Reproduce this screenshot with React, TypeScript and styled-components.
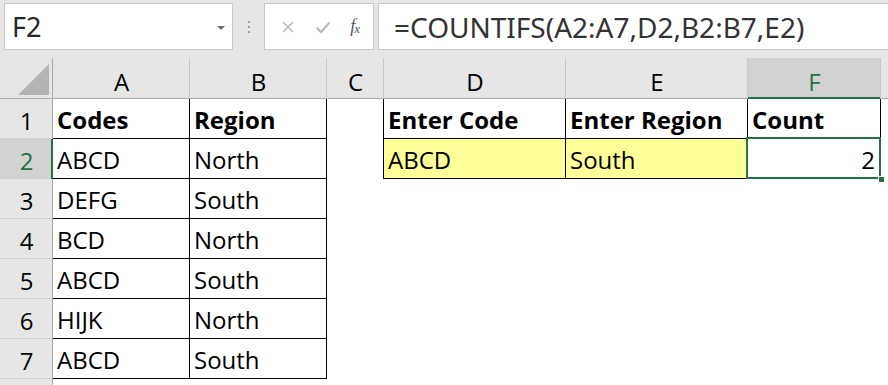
import React from 'react';
import styled, { createGlobalStyle, css } from 'styled-components';

const GlobalStyle = createGlobalStyle`
  html, body {
    margin: 0;
    padding: 0;
    background: #ffffff;
  }
`;

const GREEN = '#217346';
const CELL_FONT = `'Open Sans', 'Noto Sans', sans-serif`;
const UI_FONT = `'Noto Sans', 'Open Sans', sans-serif`;

const Sheet = styled.div`
  width: 888px;
  height: 385px;
  overflow: hidden;
  background: #ffffff;
`;

const Toolbar = styled.div`
  display: flex;
  align-items: flex-start;
  height: 58px;
  box-sizing: border-box;
  padding: 3px 0 0 4px;
  background: #e6e6e6;
`;

const Box = styled.div`
  height: 47px;
  box-sizing: border-box;
  background: #ffffff;
  border: 1px solid #c8c8c8;
  display: flex;
  align-items: center;
`;

const NameBox = styled(Box)`
  width: 229px;
  justify-content: space-between;
  padding: 0 7px 0 7px;
  font-family: ${UI_FONT};
  font-size: 27px;
  color: #262626;
`;

const DropArrow = styled.span`
  width: 0;
  height: 0;
  border-left: 4px solid transparent;
  border-right: 4px solid transparent;
  border-top: 4px solid #6f6f6f;
  margin-top: 2px;
`;

const Grip = styled.div`
  width: 31px;
  height: 47px;
  display: flex;
  flex-direction: column;
  align-items: center;
  justify-content: center;
  gap: 3px;

  span {
    width: 2px;
    height: 2px;
    background: #9e9e9e;
  }
`;

const ButtonBox = styled(Box)`
  width: 110px;
  justify-content: space-around;
  padding: 0 4px 0 6px;
`;

const FxLabel = styled.span`
  font-family: 'Liberation Serif', serif;
  font-style: italic;
  font-size: 18px;
  color: #555555;
  letter-spacing: -1px;

  sub {
    font-size: 13px;
    vertical-align: -1px;
  }
`;

const FormulaBox = styled(Box)`
  flex: 1;
  margin-left: 4px;
  margin-right: -2px;
  padding-left: 15px;
  font-family: ${UI_FONT};
  font-size: 28px;
  color: #333333;
  white-space: nowrap;
`;

const Grid = styled.div`
  display: grid;
  grid-template-columns: 53px 137px 137px 57px 182px 182px 133px 1fr;
  grid-template-rows: 41px repeat(8, 40px);
  font-family: ${CELL_FONT};
  font-size: 24px;
  line-height: 24px;
  color: #000000;
`;

const ColHead = styled.div<{ $active?: boolean }>`
  display: flex;
  align-items: flex-end;
  justify-content: center;
  padding-bottom: 5px;
  box-sizing: border-box;
  background: ${p => (p.$active ? '#d2d2d2' : '#e6e6e6')};
  color: ${p => (p.$active ? GREEN : '#000000')};
  box-shadow: ${p =>
    p.$active
      ? `inset -1px 0 0 #c8c8c8, inset 0 -2px 0 ${GREEN}`
      : 'inset -1px 0 0 #c8c8c8, inset 0 -1px 0 #ababab'};
`;

const Corner = styled.div`
  background: #e6e6e6;
  box-shadow: inset -1px 0 0 #ababab, inset 0 -1px 0 #ababab;
  display: flex;
  align-items: flex-end;
  justify-content: flex-end;
  padding: 0 4px 4px 0;
  box-sizing: border-box;

  svg {
    display: block;
  }
`;

const RowHead = styled.div<{ $active?: boolean }>`
  display: flex;
  align-items: flex-end;
  justify-content: center;
  padding-bottom: 6px;
  box-sizing: border-box;
  background: ${p => (p.$active ? '#d2d2d2' : '#e6e6e6')};
  color: ${p => (p.$active ? GREEN : '#000000')};
  box-shadow: ${p =>
    p.$active
      ? `inset -2px 0 0 ${GREEN}, inset 0 -1px 0 #d0d0d0`
      : 'inset -1px 0 0 #ababab, inset 0 -1px 0 #d0d0d0'};
`;

const Cell = styled.div<{
  $right?: boolean;
  $bottom?: boolean;
  $bold?: boolean;
  $fill?: string;
  $align?: 'left' | 'right';
  $selected?: boolean;
}>`
  position: relative;
  display: flex;
  align-items: flex-end;
  justify-content: ${p => (p.$align === 'right' ? 'flex-end' : 'flex-start')};
  padding: 0 6px 7px 4px;
  box-sizing: border-box;
  white-space: nowrap;
  font-weight: ${p => (p.$bold ? 700 : 400)};
  background: ${p => p.$fill || '#ffffff'};
  box-shadow: ${p => {
    const parts: string[] = [];
    if (p.$right) parts.push('inset -1px 0 0 #000000');
    if (p.$bottom) parts.push('inset 0 -1px 0 #000000');
    return parts.length ? parts.join(', ') : 'none';
  }};

  ${p =>
    p.$selected &&
    css`
      &::before {
        content: '';
        position: absolute;
        left: -2px;
        top: -2px;
        right: 0;
        bottom: 0;
        border: 2px solid ${GREEN};
        z-index: 2;
      }

      &::after {
        content: '';
        position: absolute;
        right: -3px;
        bottom: -3px;
        width: 5px;
        height: 5px;
        background: ${GREEN};
        box-shadow: 0 0 0 1px #ffffff;
        z-index: 3;
      }
    `}
`;

type CellData = { text: string; bold?: boolean; fill?: string; align?: 'left' | 'right' };

const columns = ['A', 'B', 'C', 'D', 'E', 'F', ''];
const YELLOW = '#ffff99';

const rows: CellData[][] = [
  [{ text: 'Codes', bold: true }, { text: 'Region', bold: true }, { text: '' }, { text: 'Enter Code', bold: true }, { text: 'Enter Region', bold: true }, { text: 'Count', bold: true }],
  [{ text: 'ABCD' }, { text: 'North' }, { text: '' }, { text: 'ABCD', fill: YELLOW }, { text: 'South', fill: YELLOW }, { text: '2', align: 'right' }],
  [{ text: 'DEFG' }, { text: 'South' }],
  [{ text: 'BCD' }, { text: 'North' }],
  [{ text: 'ABCD' }, { text: 'South' }],
  [{ text: 'HIJK' }, { text: 'North' }],
  [{ text: 'ABCD' }, { text: 'South' }],
  [],
];

// bordered blocks: A1:B7 and D1:F2 (row, col are 0-based)
const inBlock = (r: number, c: number) =>
  (r >= 0 && r <= 6 && c >= 0 && c <= 1) || (r >= 0 && r <= 1 && c >= 3 && c <= 5);

const Cross = () => (
  <svg width="14" height="14" viewBox="0 0 14 14">
    <path d="M2 2 L12 12 M12 2 L2 12" stroke="#b8b8b8" strokeWidth="1.6" fill="none" />
  </svg>
);

const Check = () => (
  <svg width="16" height="14" viewBox="0 0 16 14">
    <path d="M1.5 7.5 L6 12 L14.5 2.5" stroke="#b8b8b8" strokeWidth="2" fill="none" />
  </svg>
);

export default function App() {
  return (
    <Sheet>
      <GlobalStyle />
      <Toolbar>
        <NameBox>
          <span>F2</span>
          <DropArrow />
        </NameBox>
        <Grip>
          <span />
          <span />
          <span />
        </Grip>
        <ButtonBox>
          <Cross />
          <Check />
          <FxLabel>
            f<sub>x</sub>
          </FxLabel>
        </ButtonBox>
        <FormulaBox>=COUNTIFS(A2:A7,D2,B2:B7,E2)</FormulaBox>
      </Toolbar>
      <Grid>
        <Corner>
          <svg width="31" height="31" viewBox="0 0 31 31">
            <polygon points="31,0 31,31 0,31" fill="#b4b4b4" />
          </svg>
        </Corner>
        {columns.map((c, i) => (
          <ColHead key={i} $active={c === 'F'}>
            {c}
          </ColHead>
        ))}
        {rows.map((row, r) => (
          <React.Fragment key={r}>
            {/* row 8 sits below the fold, its number is out of view */}
            <RowHead $active={r === 1}>{r < 7 ? r + 1 : ''}</RowHead>
            {columns.map((_, c) => {
              const d = row[c] || { text: '' };
              return (
                <Cell
                  key={c}
                  $right={inBlock(r, c) || inBlock(r, c + 1)}
                  $bottom={inBlock(r, c)}
                  $bold={d.bold}
                  $fill={d.fill}
                  $align={d.align}
                  $selected={r === 1 && c === 5}
                >
                  {d.text}
                </Cell>
              );
            })}
          </React.Fragment>
        ))}
      </Grid>
    </Sheet>
  );
}
